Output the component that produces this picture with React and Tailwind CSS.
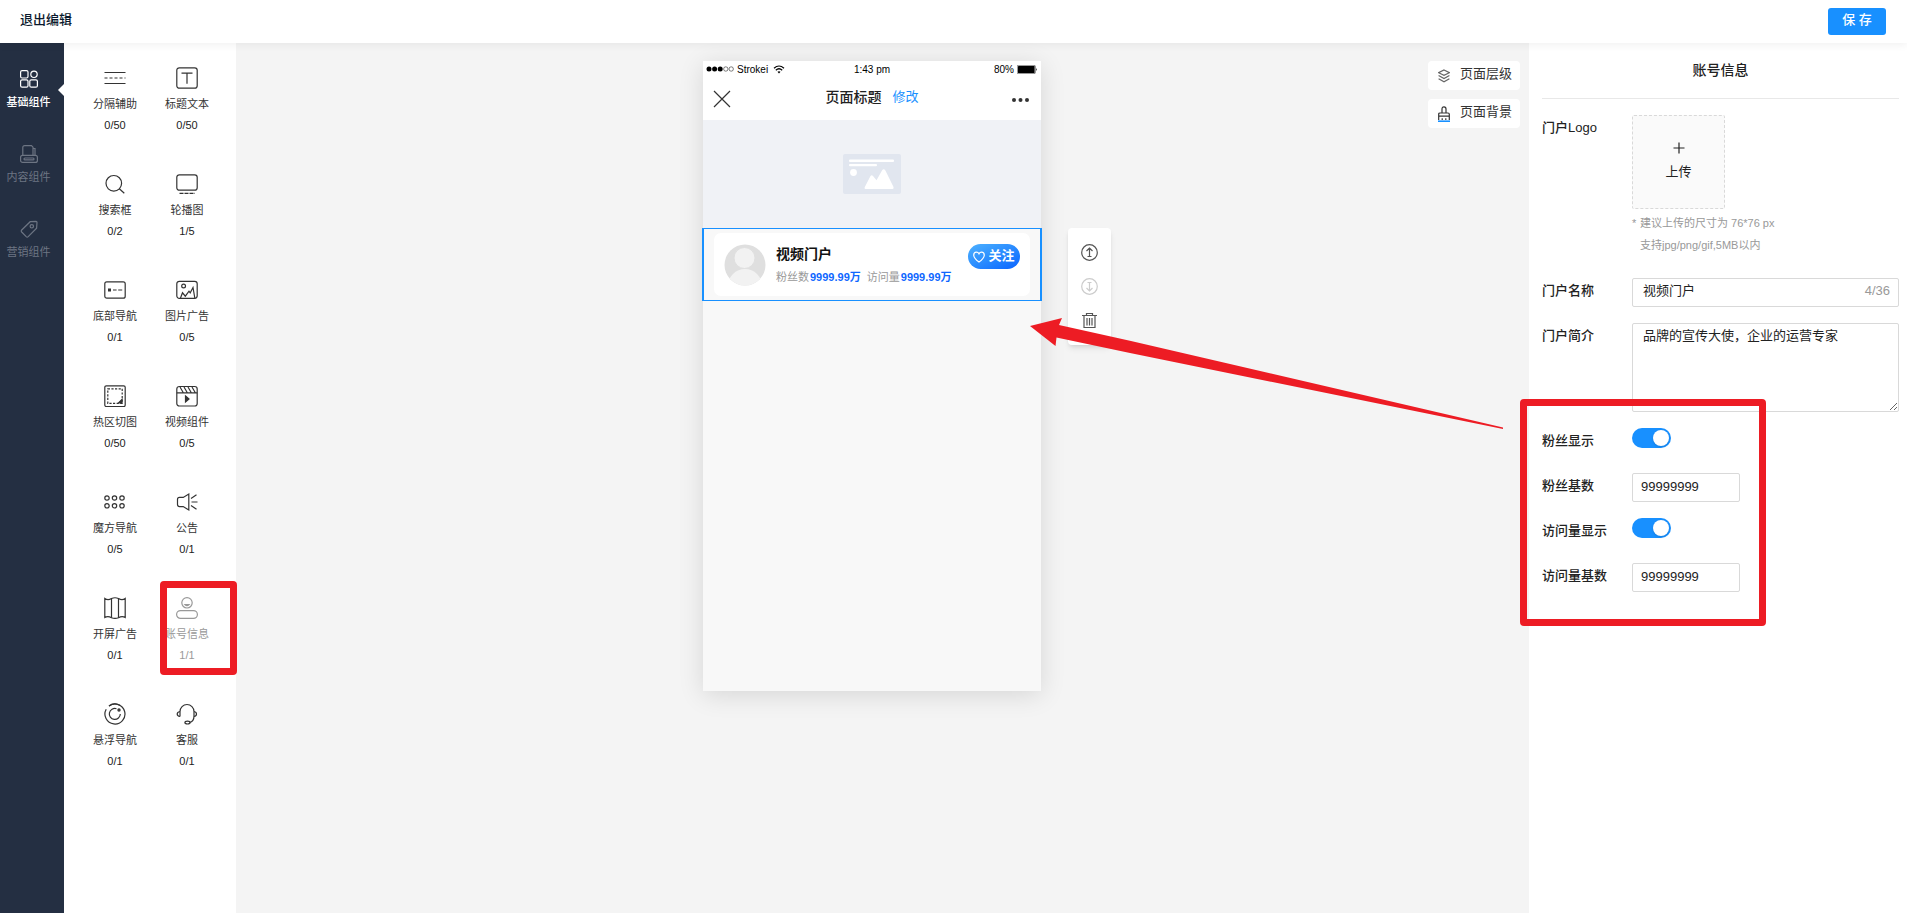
import { useState } from 'react'

const iconProps = {
  fill: 'none',
  stroke: 'currentColor',
  strokeWidth: 1.2,
  'aria-hidden': true,
}

// icons of the component palette, drawn on a 22px grid
const icons = {
  divider: (
    <>
      <path d="M0.5 5.5h21M0.5 16.5h21" />
      <path d="M0.5 11h21" strokeDasharray="3 2" />
    </>
  ),
  text: (
    <>
      <rect x="0.8" y="0.8" width="20.4" height="20.4" rx="2.5" />
      <path d="M5.5 6.2h11M11 6.2v10.6" />
    </>
  ),
  search: (
    <>
      <circle cx="9.8" cy="10.3" r="7.8" />
      <path d="M15.3 15.8l5 4.4" />
    </>
  ),
  carousel: (
    <>
      <rect x="0.8" y="1.8" width="20.4" height="15.4" rx="2.5" />
      <path d="M3.5 20.3h15.5" strokeDasharray="4 1" />
    </>
  ),
  tabbar: (
    <>
      <rect x="0.8" y="2.8" width="20.4" height="16.4" rx="2" />
      <rect x="4" y="9.5" width="3" height="3" fill="currentColor" stroke="none" />
      <path d="M9 11h3.6M14.2 11h4" />
    </>
  ),
  picture: (
    <>
      <rect x="0.8" y="2.3" width="20.4" height="17" rx="2.5" />
      <circle cx="7.6" cy="7" r="1.9" />
      <path d="M4.5 19L6.500 13.800L9.300 17.200L13 12.200L14.200 13.800L17 8.500L18.800 19" />
    </>
  ),
  hotzone: (
    <>
      <rect x="0.8" y="0.8" width="20.4" height="20.8" rx="1.5" />
      <rect x="3.8" y="3.8" width="14.4" height="14.6" strokeDasharray="2.2 1.4" />
      <path d="M18 14.500v3.500h-3.500z" fill="currentColor" />
    </>
  ),
  video: (
    <>
      <rect x="0.8" y="1.5" width="20.4" height="19.5" rx="2.5" />
      <path d="M0.8 7.8h20.4M4 2l3.2 5.5M8 2l3.2 5.5M12 2l3.2 5.5M16 2l3.2 5.5" />
      <path d="M9.500 11l3.500 3L9.500 17z" fill="currentColor" />
    </>
  ),
  cube: (
    <>
      <circle cx="3" cy="7" r="2.2" />
      <circle cx="10.5" cy="7" r="2.2" />
      <circle cx="18" cy="7" r="2.2" />
      <circle cx="3" cy="14.8" r="2.2" />
      <circle cx="10.5" cy="14.8" r="2.2" />
      <circle cx="18" cy="14.8" r="2.2" />
    </>
  ),
  notice: (
    <>
      <path d="M12.8 3v16L7.2 15.6H3.5Q1.5 15.6 1.5 13.6V8.4Q1.5 6.4 3.5 6.4H7.2z" />
      <path d="M15 7.5l5.5-3.7M15.5 11h6M15 14.5l5.5 3.7" />
    </>
  ),
  splash: (
    <>
      <path d="M0.8 1.500Q4 3.800 7.5 1.500Q11 0 14.5 1.500Q18 3.800 21.2 1.500V20.500Q18 18.500 14.5 20.8Q11 22 7.5 20.8Q4 18.500 0.8 20.500z" />
      <path d="M7.5 1.5v19.3M14.5 1.5v19.3" />
    </>
  ),
  account: (
    <>
      <circle cx="11" cy="5.8" r="5.2" />
      <path d="M9 7.5q2 2 4 0z" />
      <rect x="0.6" y="13.6" width="20.8" height="7.8" rx="3.9" />
    </>
  ),
  float: (
    <>
      <path d="M2.200 6.200A10 10 0 1 0 5 3" />
      <path d="M5 3A10 10 0 0 1 16 2.300" />
      <path d="M12.5 5.7A5.5 5.5 0 1 0 16.3 11" />
      <circle cx="15" cy="7" r="1.1" fill="currentColor" />
    </>
  ),
  service: (
    <>
      <path d="M4 13.5V8.5A7 7 0 0 1 18 8.5V13Q18 18.5 13.5 19.5" />
      <path d="M4 8.5Q1.2 9 1.2 11T4 13.5M18 8.5Q20.5 9 20.5 11T18 13.5" />
      <ellipse cx="11.5" cy="19.6" rx="2.6" ry="1.4" />
    </>
  ),
}

const components = [
  { icon: 'divider', name: '分隔辅助', count: '0/50' },
  { icon: 'text', name: '标题文本', count: '0/50' },
  { icon: 'search', name: '搜索框', count: '0/2' },
  { icon: 'carousel', name: '轮播图', count: '1/5' },
  { icon: 'tabbar', name: '底部导航', count: '0/1' },
  { icon: 'picture', name: '图片广告', count: '0/5' },
  { icon: 'hotzone', name: '热区切图', count: '0/50' },
  { icon: 'video', name: '视频组件', count: '0/5' },
  { icon: 'cube', name: '魔方导航', count: '0/5' },
  { icon: 'notice', name: '公告', count: '0/1' },
  { icon: 'splash', name: '开屏广告', count: '0/1' },
  { icon: 'account', name: '账号信息', count: '1/1', used: true },
  { icon: 'float', name: '悬浮导航', count: '0/1' },
  { icon: 'service', name: '客服', count: '0/1' },
]

const categories = [
  {
    name: '基础组件',
    active: true,
    icon: (
      <>
        <rect x="0.6" y="0.6" width="7.4" height="7.4" rx="1.5" />
        <circle cx="14" cy="4.3" r="3.2" />
        <rect x="0.6" y="9.8" width="7.4" height="7.4" rx="1.5" />
        <rect x="9.8" y="9.8" width="7.6" height="7.4" rx="1.5" />
      </>
    ),
  },
  {
    name: '内容组件',
    icon: (
      <>
        <path d="M2.8 10V2.5Q2.8 0.6 4.7 0.6H11.5L13 2.2V10M13 3.5h2v6.8" />
        <rect x="0.6" y="10.4" width="16.8" height="7" rx="2" />
        <rect x="4" y="13" width="10" height="1.8" rx="0.9" />
      </>
    ),
  },
  {
    name: '营销组件',
    icon: (
      <>
        <path d="M10.2 1.7L16 1.3Q17 1.3 17 2.3L16.6 8.2L8.2 16.6Q7.2 17.5 6.2 16.6L1.7 12Q0.8 11 1.7 10z" />
        <circle cx="11.8" cy="6.3" r="1.7" />
      </>
    ),
  },
]

function Sidebar() {
  return (
    <nav className="w-16 shrink-0 bg-[#242f42] pt-[27px] pr-[7px] flex flex-col gap-[33px]">
      {categories.map((c) => (
        <button
          key={c.name}
          type="button"
          className={`relative flex flex-col items-center gap-1 text-[11px] leading-5 ${
            c.active ? 'text-white font-medium' : 'text-[#6d7583]'
          }`}
        >
          <svg {...iconProps} width="18" height="18" viewBox="0 0 18 18">
            {c.icon}
          </svg>
          {c.name}
          {c.active && (
            <span className="absolute top-3.5 -right-[7px] border-y-[6px] border-y-transparent border-r-[6px] border-r-white" />
          )}
        </button>
      ))}
    </nav>
  )
}

function Palette() {
  return (
    <aside className="w-[172px] shrink-0 bg-white pl-[15px] pr-[13px] pt-6">
      <div className="grid grid-cols-2 gap-y-[37px]">
        {components.map((c) => (
          <button
            key={c.name}
            type="button"
            className={`relative flex flex-col items-center text-[11px] leading-[21px] ${
              c.used ? 'text-[#999]' : 'text-[#333]'
            }`}
          >
            <svg {...iconProps} width="22" height="22" viewBox="0 0 22 22" className="mb-[5px]">
              {icons[c.icon]}
            </svg>
            <span>{c.name}</span>
            <span className={c.used ? '' : 'text-[#222]'}>{c.count}</span>
            {c.used && (
              <span className="absolute -top-4 left-[9px] z-10 h-[94px] w-[77px] rounded-sm border-[7px] border-[#ed1c24]" />
            )}
          </button>
        ))}
      </div>
    </aside>
  )
}

function StatusBar() {
  return (
    <div className="grid grid-cols-3 items-center px-[3px] h-4 text-[10px] text-black">
      <div className="flex items-center gap-[3px]">
        <svg width="28" height="6" viewBox="0 0 28 6" aria-hidden>
          <circle cx="3" cy="3" r="2.5" />
          <circle cx="8.6" cy="3" r="2.5" />
          <circle cx="14.2" cy="3" r="2.5" />
          <circle cx="19.8" cy="3" r="2.2" fill="none" stroke="#000" strokeWidth="0.5" />
          <circle cx="25.2" cy="3" r="2.2" fill="none" stroke="#000" strokeWidth="0.5" />
        </svg>
        <span>Strokei</span>
        <svg {...iconProps} width="12" height="9" viewBox="0 0 12 9" className="ml-0.5">
          <path d="M1 3.2Q6-1.2 11 3.2M2.8 5.2Q6 2.3 9.2 5.2" />
          <path d="M4.5 6.8Q6 5.5 7.5 6.8L6 8.4z" fill="currentColor" stroke="none" />
        </svg>
      </div>
      <span className="text-center">1:43 pm</span>
      <div className="flex items-center justify-end gap-[3px]">
        <span>80%</span>
        <svg width="21" height="9" viewBox="0 0 21 9" aria-hidden>
          <rect x="0.3" y="0.3" width="18" height="8.4" rx="1" fill="none" stroke="#000" strokeWidth="0.5" />
          <rect x="1" y="1" width="16.6" height="7" rx="0.5" />
          <path d="M19 3q1.5 1.5 0 3z" />
        </svg>
      </div>
    </div>
  )
}

function AccountCard({ name }) {
  return (
    <div className="flex items-start rounded-[7px] bg-white h-[63px] pl-2.5 pr-2.5 pt-[11px]">
      <svg width="42" height="42" viewBox="0 0 42 42" className="shrink-0" aria-hidden>
        <clipPath id="avatar">
          <circle cx="21" cy="21" r="20.5" />
        </clipPath>
        <g clipPath="url(#avatar)">
          <rect width="42" height="42" fill="#dfdfdf" />
          <ellipse cx="21" cy="42" rx="17" ry="17" fill="#f2f2f2" />
          <circle cx="20.5" cy="14" r="10.5" fill="#f2f2f2" stroke="#dfdfdf" />
        </g>
      </svg>
      <div className="ml-2.5 flex-1">
        <p className="text-sm leading-5 font-bold text-[#111]">{name}</p>
        <p className="flex gap-1.5 pt-1 text-[11px] leading-[18px] text-[#999] whitespace-nowrap">
          <span className="flex gap-px">
            粉丝数<b className="text-[#0f67ff]">9999.99万</b>
          </span>
          <span className="flex gap-px">
            访问量<b className="text-[#0f67ff]">9999.99万</b>
          </span>
        </p>
      </div>
      <button
        type="button"
        className="flex h-[25px] w-[52px] shrink-0 items-center justify-center gap-[3px] rounded-full bg-linear-to-br from-[#4db1ff] to-[#0d62ff] text-[13px] leading-5 font-bold text-white"
      >
        <svg {...iconProps} width="12" height="12" viewBox="0 0 12 12" className="shrink-0">
          <path d="M6 11Q1 7.5 0.7 4.2Q0.8 1.2 3.4 1.2Q5.2 1.2 6 2.8Q6.8 1.2 8.6 1.2Q11.2 1.2 11.3 4.2Q11 7.5 6 11z" />
        </svg>
        <span className="pb-0.5">关注</span>
      </button>
    </div>
  )
}

function ElementTools() {
  return (
    <div className="absolute -top-px left-[364px] flex h-[117px] w-[43px] flex-col items-center gap-[17px] rounded-sm bg-white pt-4 text-[#555] shadow-md">
      <button type="button" aria-label="上移">
        <svg {...iconProps} width="17" height="17" viewBox="0 0 17 17">
          <circle cx="8.5" cy="8.5" r="7.8" />
          <path d="M8.5 12.5V4.5M5.5 7l3-3 3 3M6.5 12.5h4" />
        </svg>
      </button>
      <button type="button" aria-label="下移" className="text-[#ccc]">
        <svg {...iconProps} width="17" height="17" viewBox="0 0 17 17">
          <circle cx="8.5" cy="8.5" r="7.8" />
          <path d="M8.5 4.5v8M5.5 10l3 3 3-3M6.5 4.5h4" />
        </svg>
      </button>
      <button type="button" aria-label="删除">
        <svg {...iconProps} width="17" height="17" viewBox="0 0 17 17">
          <path d="M1 3.5h15M5.5 3.5V1.5h6v2M3 3.5V15.5H14V3.5M6 6v7.5M8.5 6v7.5M11 6v7.5" />
        </svg>
      </button>
    </div>
  )
}

function Phone({ name }) {
  return (
    <section className="relative h-[630px] w-[338px] shrink-0 bg-[#f8f8f8] shadow-[0_4px_24px_rgba(0,0,0,0.12)]">
      <div className="h-[59px] bg-white">
        <StatusBar />
        <div className="grid grid-cols-[1fr_auto_1fr] items-center px-2.5 pt-1 leading-8">
          <button type="button" aria-label="关闭" className="w-[18px] pt-1">
            <svg {...iconProps} width="18" height="18" viewBox="0 0 18 18" className="text-[#333]">
              <path d="M1 1l16 16M17 1L1 17" />
            </svg>
          </button>
          <div className="flex items-center gap-[11px]">
            <span className="text-sm leading-8 font-medium text-[#222]">页面标题</span>
            <a href="#title" className="text-[13px] leading-8 text-[#1890ff]">
              修改
            </a>
          </div>
          <button type="button" aria-label="更多" className="justify-self-end pt-1.5">
            <svg width="20" height="6" viewBox="0 0 20 6" fill="#333" aria-hidden>
              <circle cx="3" cy="3" r="2" />
              <circle cx="9.5" cy="3" r="2" />
              <circle cx="16" cy="3" r="2" />
            </svg>
          </button>
        </div>
      </div>

      <div className="flex h-[108px] items-start justify-center bg-[#f0f2f6] pt-[34px]">
        <svg width="58" height="40" viewBox="0 0 58 40" aria-hidden>
          <rect width="58" height="40" rx="2" fill="#e1e6ef" />
          <g fill="#fff">
            <rect x="6" y="5.5" width="45" height="2.5" rx="1" />
            <rect x="6" y="10" width="28" height="2.3" rx="1" />
            <circle cx="10.5" cy="18.5" r="3.4" />
            <path d="M22.5 35Q21 35 21.7 33.3L27.5 22Q28.7 20.3 30 22L33.5 26.3L39 16.5Q40.7 13.8 42.4 16.5L50.5 33Q51 35 49.5 35z" />
          </g>
        </svg>
      </div>

      <div className="relative -mx-px border-x-2 border-y border-[#1890ff] px-2.5 py-1">
        <AccountCard name={name} />
        <ElementTools />
      </div>
    </section>
  )
}

function PageTools() {
  return (
    <div className="absolute top-[18px] right-[9px] flex flex-col gap-[9px] text-[13px] text-[#333]">
      <button type="button" className="flex h-[29px] w-[92px] items-center gap-2.5 rounded-sm bg-white pl-2.5">
        <svg {...iconProps} width="12" height="14" viewBox="0 0 12 14" className="text-[#666]">
          <path d="M6 1l5.4 2.7L6 6.4L0.6 3.7zM0.6 6.5L6 9.5l5.4-3M0.6 9.8L6 12.8l5.4-3" />
        </svg>
        <span className="pb-1">页面层级</span>
      </button>
      <button type="button" className="flex h-[29px] w-[92px] items-center gap-2.5 rounded-sm bg-white pl-2.5">
        <svg {...iconProps} width="12" height="16" viewBox="0 0 12 16">
          <path d="M4 7V3Q4 0.800 6 0.800T8 3V7M0.7 14V8.200Q0.7 7 2 7H10Q11.3 7 11.3 8.200V14M0.7 10.2h10.6M4.200 12.3V14M7.800 12.3V14" />
          <path d="M0 15.200h12" stroke="#1890ff" strokeWidth="1.6" />
        </svg>
        <span className="pb-1">页面背景</span>
      </button>
    </div>
  )
}

function Field({ label, id, children }) {
  return (
    <div className="flex min-h-[29px] items-start">
      <label htmlFor={id} className="w-[90px] shrink-0 text-[13px] leading-[26px] font-medium text-[#222]">
        {label}
      </label>
      <div className="min-w-0 flex-1">{children}</div>
    </div>
  )
}

function Switch({ id, checked, onChange }) {
  return (
    <input
      id={id}
      type="checkbox"
      role="switch"
      checked={checked}
      onChange={(e) => onChange(e.target.checked)}
      className="block h-5 w-[39px] cursor-pointer appearance-none rounded-full bg-[#bfbfbf] p-0.5 before:block before:size-4 before:rounded-full before:bg-white before:shadow-sm checked:bg-[#1890ff] checked:before:ml-[19px]"
    />
  )
}

const inputClass =
  'block rounded-xs border border-[#d9d9d9] bg-white text-[13px] text-[#222] outline-none focus:border-[#1890ff]'

function Settings({ name, setName }) {
  const [intro, setIntro] = useState('品牌的宣传大使，企业的运营专家')
  const [showFans, setShowFans] = useState(true)
  const [fans, setFans] = useState('99999999')
  const [showVisits, setShowVisits] = useState(true)
  const [visits, setVisits] = useState('99999999')

  return (
    <aside className="w-[378px] shrink-0 bg-white pl-[13px] pr-2">
      <h2 className="flex h-14 items-center justify-center border-b border-[#e8e8e8] pb-0.5 text-sm font-medium text-[#222]">
        账号信息
      </h2>
      <form className="flex flex-col gap-4 pt-4">
        <Field label="门户Logo" id="logo">
          <button
            id="logo"
            type="button"
            className="flex h-[94px] w-[93px] flex-col items-center justify-center gap-2 rounded-xs border border-dashed border-[#d9d9d9] bg-[#fafafa] text-[13px] leading-5 text-[#222]"
          >
            <svg {...iconProps} width="12" height="12" viewBox="0 0 12 12">
              <path d="M6 0.5v11M0.5 6h11" />
            </svg>
            <span>上传</span>
          </button>
          <p className="pt-[3px] text-[11px] leading-[22px] text-[#999]">
            <span className="inline-block w-2">*</span>建议上传的尺寸为 76*76 px
          </p>
          <p className="pb-1.5 pl-2 text-[11px] leading-[22px] text-[#999]">支持jpg/png/gif,5MB以内</p>
        </Field>
        <Field label="门户名称" id="name">
          <div className={`${inputClass} flex h-[29px] items-center pb-1 pl-2.5 pr-2`}>
            <input
              id="name"
              maxLength={36}
              value={name}
              onChange={(e) => setName(e.target.value)}
              className="min-w-0 flex-1 outline-none"
            />
            <span className="text-[#999]">{name.length}/36</span>
          </div>
        </Field>
        <Field label="门户简介" id="intro">
          <textarea
            id="intro"
            value={intro}
            onChange={(e) => setIntro(e.target.value)}
            className={`${inputClass} h-[89px] w-full px-2.5 py-0.5 leading-5`}
          />
        </Field>

        <div className="relative flex flex-col gap-4">
          <Field label="粉丝显示" id="show-fans">
            <Switch id="show-fans" checked={showFans} onChange={setShowFans} />
          </Field>
          <Field label="粉丝基数" id="fans">
            <input
              id="fans"
              value={fans}
              onChange={(e) => setFans(e.target.value)}
              className={`${inputClass} h-[29px] w-[108px] px-2 pb-0.5`}
            />
          </Field>
          <Field label="访问量显示" id="show-visits">
            <Switch id="show-visits" checked={showVisits} onChange={setShowVisits} />
          </Field>
          <Field label="访问量基数" id="visits">
            <input
              id="visits"
              value={visits}
              onChange={(e) => setVisits(e.target.value)}
              className={`${inputClass} h-[29px] w-[108px] px-2 pb-0.5`}
            />
          </Field>
          <div className="pointer-events-none absolute -top-[29px] -left-[22px] h-[227px] w-[246px] rounded-sm border-[7px] border-[#ed1c24]" />
        </div>
      </form>
    </aside>
  )
}

export default function App() {
  const [name, setName] = useState('视频门户')

  return (
    <div className="flex min-h-screen flex-col bg-[#f4f4f4] font-['Liberation_Sans','Noto_Sans_CJK_SC',sans-serif]">
      <header className="relative z-10 flex h-[43px] items-start justify-between bg-white pl-5 pr-[21px] shadow-[0_2px_8px_rgba(0,0,0,0.06)]">
        <a href="#exit" className="text-[13px] leading-10 font-medium text-[#0b1a2e]">
          退出编辑
        </a>
        <button
          type="button"
          className="mt-2 h-[27px] w-[58px] rounded-[3px] bg-[#1890ff] pb-1 text-[13px] leading-5 font-medium text-white"
        >
          保 存
        </button>
      </header>

      <div className="flex flex-1">
        <Sidebar />
        <Palette />
        <main className="relative flex flex-1 justify-center pt-[18px] pr-[21px]">
          <Phone name={name} />
          <PageTools />
          {/* pointer from the counters form to the card in the preview */}
          <svg
            className="pointer-events-none absolute top-[273px] right-[25px] text-[#ed1c24]"
            width="474"
            height="114"
            viewBox="0 0 474 114"
            fill="currentColor"
            aria-hidden
          >
            <path d="M0 10L32 2L29 9L101 25L473 111.5V113L100 37L26.5 21.5L25.5 30z" />
          </svg>
        </main>
        <Settings name={name} setName={setName} />
      </div>
    </div>
  )
}
